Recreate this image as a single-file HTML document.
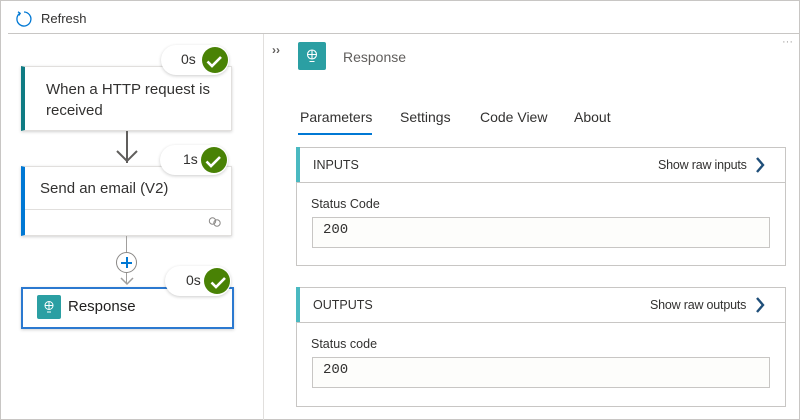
<!DOCTYPE html>
<html><head><meta charset="utf-8"><style>
*{box-sizing:border-box;margin:0;padding:0}
body{width:800px;height:420px;overflow:hidden;background:#fff;font-family:"Liberation Sans",sans-serif;color:#323130;position:relative}
.a{position:absolute}
.t{position:absolute;white-space:nowrap}
.card{position:absolute;background:#fff;border:1px solid #e1dfdd;box-shadow:0 1px 3px rgba(0,0,0,.18)}
.badge{position:absolute;height:30px;border-radius:15px;background:#fff;box-shadow:0 1px 3px rgba(0,0,0,.2);font-size:14px}
.chk{position:absolute;width:26px;height:26px;border-radius:50%;background:#498205;top:2px;right:1px}
.box{position:absolute;border:1px solid #c8c6c4;background:#fff}
.inp{position:absolute;border:1px solid #c8c6c4;background:#fdfdfb;font-family:"Liberation Mono",monospace;font-size:14px;padding:4px 0 0 10px}
</style></head><body>
<div class="a" style="left:0;top:0;width:800px;height:420px;border:1px solid #c8c6c4"></div>
<svg class="a" style="left:15px;top:10px" width="18" height="18" viewBox="0 0 18 18"><path d="M5 3.2A7 7 0 1 0 9 2" fill="none" stroke="#0078d4" stroke-width="1.3"/><path d="M3 1.8L5.2 3.3 4 5.5" fill="none" stroke="#0078d4" stroke-width="1.3"/></svg>
<div class="t" style="left:41px;top:11px;font-size:13px">Refresh</div>
<div class="a" style="left:8px;top:33px;width:792px;height:1px;background:#c8c6c4"></div>
<div class="a" style="left:263px;top:34px;width:1px;height:386px;background:#e1dfdd"></div>

<div class="card" style="left:21px;top:66px;width:211px;height:65px;border-left:4px solid #0f7b83"></div>
<div class="t" style="left:46px;top:79px;font-size:15px;line-height:21px">When a HTTP request is<br>received</div>
<div class="badge" style="left:161px;top:45px;width:68px"><span class="t" style="left:20px;top:6px">0s</span><div class="chk"></div></div>
<svg class="a" style="left:200px;top:47px" width="28" height="28"><path d="M7.5 14.5l4.5 4.5 9-9" fill="none" stroke="#fff" stroke-width="2.6"/></svg>
<div class="a" style="left:126px;top:131px;width:2px;height:32px;background:#605e5c"></div>
<svg class="a" style="left:115px;top:148px" width="24" height="16"><path d="M2 3l10 10 10-10" fill="none" stroke="#605e5c" stroke-width="2"/></svg>

<div class="card" style="left:21px;top:166px;width:211px;height:70px;border-left:4px solid #0078d4"></div>
<div class="a" style="left:25px;top:209px;width:206px;height:1px;background:#e1dfdd"></div>
<div class="t" style="left:40px;top:180px;font-size:15px">Send an email (V2)</div>
<svg class="a" style="left:208px;top:216px" width="14" height="12"><circle cx="4.5" cy="5" r="3.2" fill="none" stroke="#8a8886"/><circle cx="9" cy="7" r="3.2" fill="none" stroke="#8a8886"/></svg>
<div class="badge" style="left:160px;top:145px;width:68px"><span class="t" style="left:23px;top:6px">1s</span><div class="chk"></div></div>
<svg class="a" style="left:199px;top:147px" width="28" height="28"><path d="M7.5 14.5l4.5 4.5 9-9" fill="none" stroke="#fff" stroke-width="2.6"/></svg>

<div class="a" style="left:126px;top:236px;width:1px;height:48px;background:#a19f9d"></div>
<div class="a" style="left:116px;top:252px;width:21px;height:21px;border-radius:50%;background:#fff;border:1px solid #8a8886"></div>
<div class="a" style="left:121px;top:262px;width:11px;height:1.5px;background:#0078d4"></div>
<div class="a" style="left:126px;top:257px;width:1.5px;height:11px;background:#0078d4"></div>
<svg class="a" style="left:120px;top:277px" width="14" height="9"><path d="M1 1l6 6 6-6" fill="none" stroke="#a19f9d" stroke-width="1.5"/></svg>

<div class="card" style="left:21px;top:287px;width:213px;height:42px;border:2px solid #2b79d0"></div>
<div class="a" style="left:37px;top:295px;width:24px;height:24px;background:#2b9fa3;border-radius:2px"></div>
<svg class="a" style="left:41px;top:299px" width="16" height="16"><circle cx="8" cy="6.5" r="4" fill="none" stroke="#fff" stroke-width="1"/><path d="M4 6.5h8M8 2.5v8M6 13h4" stroke="#fff" stroke-width="1" fill="none"/></svg>
<div class="t" style="left:68px;top:298px;font-size:15px;color:#201f1e">Response</div>
<div class="badge" style="left:165px;top:266px;width:66px"><span class="t" style="left:21px;top:6px">0s</span><div class="chk"></div></div>
<svg class="a" style="left:204px;top:268px" width="28" height="28"><path d="M7.5 14.5l4.5 4.5 9-9" fill="none" stroke="#fff" stroke-width="2.6"/></svg>

<div class="t" style="left:272px;top:43px;font-size:12px;font-weight:bold;color:#605e5c">&rsaquo;&rsaquo;</div>
<div class="a" style="left:298px;top:42px;width:28px;height:28px;background:#2b9fa3;border-radius:2px"></div>
<svg class="a" style="left:303px;top:47px" width="18" height="18"><circle cx="9" cy="7.5" r="4.5" fill="none" stroke="#fff" stroke-width="1.1"/><path d="M4.5 7.5h9M9 3v9M6.5 14.5h5" stroke="#fff" stroke-width="1.1" fill="none"/></svg>
<div class="t" style="left:343px;top:49px;font-size:14px;color:#605e5c">Response</div>
<div class="t" style="left:782px;top:36px;font-size:11px;color:#a19f9d">···</div>

<div class="t" style="left:300px;top:109px;font-size:14px">Parameters</div>
<div class="t" style="left:400px;top:109px;font-size:14px">Settings</div>
<div class="t" style="left:480px;top:109px;font-size:14px">Code View</div>
<div class="t" style="left:574px;top:109px;font-size:14px">About</div>
<div class="a" style="left:298px;top:133px;width:74px;height:2px;background:#0078d4"></div>

<div class="box" style="left:296px;top:147px;width:490px;height:119px"></div>
<div class="a" style="left:296px;top:147px;width:4px;height:36px;background:#4ab9c1"></div>
<div class="a" style="left:296px;top:182px;width:490px;height:1px;background:#c8c6c4"></div>
<div class="t" style="left:313px;top:158px;font-size:12.5px">INPUTS</div>
<div class="t" style="left:658px;top:158px;font-size:12.5px;letter-spacing:-0.2px">Show raw inputs</div>
<svg class="a" style="left:754px;top:156px" width="12" height="18"><path d="M3 2l6 7-6 7" fill="none" stroke="#1f4e79" stroke-width="2.4"/></svg>
<div class="t" style="left:311px;top:197px;font-size:12.5px">Status Code</div>
<div class="inp" style="left:312px;top:217px;width:458px;height:31px">200</div>

<div class="box" style="left:296px;top:287px;width:490px;height:120px"></div>
<div class="a" style="left:296px;top:287px;width:4px;height:36px;background:#4ab9c1"></div>
<div class="a" style="left:296px;top:322px;width:490px;height:1px;background:#c8c6c4"></div>
<div class="t" style="left:313px;top:298px;font-size:12.5px">OUTPUTS</div>
<div class="t" style="left:650px;top:298px;font-size:12.5px;letter-spacing:-0.2px">Show raw outputs</div>
<svg class="a" style="left:754px;top:296px" width="12" height="18"><path d="M3 2l6 7-6 7" fill="none" stroke="#1f4e79" stroke-width="2.4"/></svg>
<div class="t" style="left:311px;top:337px;font-size:12.5px">Status code</div>
<div class="inp" style="left:312px;top:357px;width:458px;height:31px">200</div>
</body></html>
